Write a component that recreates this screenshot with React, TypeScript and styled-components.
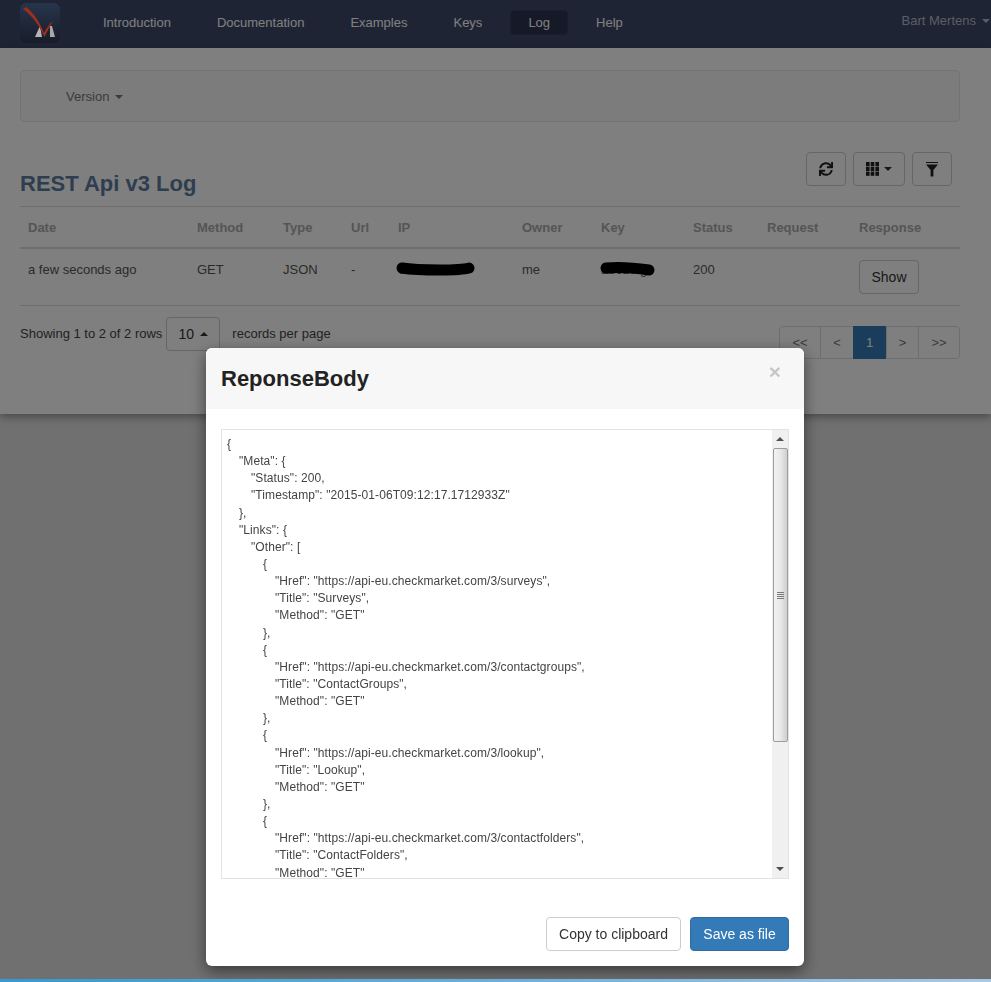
import React from "react";
import styled, { createGlobalStyle } from "styled-components";
import { FaSync } from "react-icons/fa";

const GlobalStyle = createGlobalStyle`
  html, body {
    margin: 0;
    height: 982px;
    overflow: hidden;
    background: #e0e0e0;
    font-family: "Liberation Sans", Arial, sans-serif;
    font-size: 13px;
    line-height: 20px;
    color: #555;
  }
  * { box-sizing: border-box; }
`;

const Navbar = styled.nav`
  display: flex;
  align-items: center;
  height: 48px;
  padding: 0 1px 0 20px;
  background: #3c4866;
`;

const Logo = styled.svg`
  position: relative;
  z-index: 2;
  width: 40px;
  height: 40px;
  margin: -3px 25px 0 0;
  flex-shrink: 0;
`;

const NavList = styled.div`
  display: flex;
  align-items: center;
  gap: 10px;
  flex: 1;
  margin-top: -3px;
`;

const NavLink = styled.a<{ $active?: boolean }>`
  display: block;
  height: 25px;
  padding: 0 18px;
  line-height: 26px;
  color: #ffffff;
  background: ${(p) => (p.$active ? "#2c3350" : "transparent")};
  border: ${(p) => (p.$active ? "1px solid #343c58" : "none")};
  border-radius: 4px;
  ${(p) => p.$active && "padding: 0 17px; line-height: 24px;"}
`;

const UserMenu = styled.a`
  display: flex;
  align-items: center;
  gap: 6px;
  margin-top: -6px;
  color: #b4bccb;
`;

const Caret = styled.span<{ $up?: boolean; $color?: string }>`
  display: inline-block;
  width: 0;
  height: 0;
  border-left: 4px solid transparent;
  border-right: 4px solid transparent;
  ${(p) => (p.$up ? "border-bottom" : "border-top")}: 4px solid ${(p) => p.$color || "currentColor"};
`;

const Main = styled.main`
  height: 366px;
  padding: 22px 31px 0 20px;
  background: #ffffff;
  box-shadow: 0 3px 8px rgba(0, 0, 0, 0.35);
`;

const VersionBar = styled.div`
  display: flex;
  align-items: center;
  height: 52px;
  padding: 2px 0 0 45px;
  background: #f8f8f8;
  border: 1px solid #e7e7e7;
  border-radius: 4px;
`;

const VersionLink = styled.a`
  display: flex;
  align-items: center;
  gap: 6px;
  color: #777;
`;

const TitleRow = styled.div`
  display: flex;
  justify-content: space-between;
  height: 84px;
  padding: 30px 8px 0 0;
`;

const Title = styled.h3`
  margin: 18px 0 0;
  font-size: 22px;
  line-height: 28px;
  font-weight: 700;
  color: #5e7c9e;
`;

const Toolbar = styled.div`
  display: flex;
  gap: 7px;
  align-items: flex-start;
`;

const Button = styled.button<{ $width?: number; $primary?: boolean }>`
  display: inline-flex;
  align-items: center;
  justify-content: center;
  gap: 5px;
  height: 34px;
  width: ${(p) => (p.$width ? `${p.$width}px` : "auto")};
  padding: 0;
  font: 14px/20px "Liberation Sans", Arial, sans-serif;
  color: ${(p) => (p.$primary ? "#ffffff" : "#333")};
  background: ${(p) => (p.$primary ? "#337ab7" : "#ffffff")};
  border: 1px solid ${(p) => (p.$primary ? "#2e6da4" : "#ccc")};
  border-radius: 4px;
`;

const Table = styled.table`
  width: 940px;
  table-layout: fixed;
  border-collapse: collapse;
  border-top: 1px solid #ddd;
  border-bottom: 1px solid #ddd;
`;

const Col = styled.col<{ $w: number }>`
  width: ${(p) => p.$w}px;
`;

const Th = styled.th`
  height: 41px;
  padding: 2px 8px 0;
  text-align: left;
  font-weight: 700;
  color: #aaa;
  border-bottom: 2px solid #ddd;
`;

const Td = styled.td`
  position: relative;
  height: 58px;
  padding: 11px 8px 0;
  vertical-align: top;
  white-space: nowrap;
`;

const ShowButton = styled(Button)`
  display: flex;
`;

const Redaction = styled.svg`
  position: absolute;
  left: 0;
  top: 0;
`;

const TableFooter = styled.div`
  display: flex;
  align-items: flex-start;
  padding-top: 11px;
`;

const RowsInfo = styled.div`
  display: flex;
  align-items: center;
  height: 34px;
  color: #444;
`;

const PageSize = styled(Button)`
  width: 54px;
  margin: 0 12px 0 4px;
  gap: 6px;
`;

const Pagination = styled.div`
  display: flex;
  margin: 9px 0 0 auto;
  height: 33px;
  border: 1px solid #ddd;
  border-radius: 4px;
`;

const PageCell = styled.a<{ $w: number; $active?: boolean }>`
  display: flex;
  align-items: center;
  justify-content: center;
  width: ${(p) => p.$w}px;
  margin: ${(p) => (p.$active ? "-1px 0" : "0")};
  color: ${(p) => (p.$active ? "#ffffff" : "#777")};
  background: ${(p) => (p.$active ? "#337ab7" : "transparent")};
  border-left: ${(p) => (p.$active ? "none" : "1px solid #ddd")};
  &:first-child { border-left: none; }
`;

const Backdrop = styled.div`
  position: fixed;
  z-index: 1;
  inset: 0;
  padding: 348px 0 0 206px;
  background: rgba(0, 0, 0, 0.5);
`;

const Modal = styled.div`
  width: 598px;
  height: 618px;
  background: #ffffff;
  border-radius: 6px;
  box-shadow: 0 5px 15px rgba(0, 0, 0, 0.5);
  overflow: hidden;
`;

const ModalHeader = styled.header`
  display: flex;
  justify-content: space-between;
  height: 61px;
  padding: 16px 23px 0 15px;
  background: #f7f7f7;
`;

const ModalTitle = styled.h4`
  margin: 0;
  font-size: 22px;
  line-height: 30px;
  font-weight: 700;
  color: #222;
`;

const Close = styled.span`
  margin-top: -3px;
  font-size: 21px;
  line-height: 21px;
  font-weight: 700;
  color: #000;
  opacity: 0.2;
`;

const ModalBody = styled.div`
  padding: 20px 15px 0;
`;

const JsonBox = styled.div`
  display: flex;
  height: 450px;
  border: 1px solid #e3e3e3;
`;

const JsonText = styled.pre`
  flex: 1;
  margin: 0;
  padding: 6px 5px 0;
  overflow: hidden;
  font: 12px/17.14px "Liberation Sans", Arial, sans-serif;
  letter-spacing: 0.08px;
  color: #444;
  tab-size: 12px;
`;

const Scrollbar = styled.div`
  display: flex;
  flex-direction: column;
  align-items: center;
  width: 16px;
  background: #f0f0f0;
`;

const ScrollArrow = styled.div`
  display: flex;
  align-items: center;
  justify-content: center;
  height: 18px;
  flex-shrink: 0;
  color: #505050;
`;

const ScrollThumb = styled.div`
  display: flex;
  flex-direction: column;
  justify-content: center;
  align-items: center;
  gap: 1px;
  width: 15px;
  height: 294px;
  background: linear-gradient(90deg, #f2f2f2, #e8e8e8 50%, #cfcfcf);
  border: 1px solid #9c9c9c;
  border-radius: 2px;
`;

const Grip = styled.span`
  width: 7px;
  height: 1px;
  background: #7a7a7a;
`;

const ScrollTrack = styled.div`
  flex: 1;
`;

const ModalFooter = styled.footer`
  display: flex;
  justify-content: flex-end;
  gap: 9px;
  padding: 38px 15px 0;
`;

const TaskbarEdge = styled.div`
  position: fixed;
  z-index: 2;
  left: 0;
  right: 0;
  bottom: 0;
  height: 3px;
  background: linear-gradient(90deg, #3a97d0, #62aedc 45%, #a9c8e6 100%);
`;

const COLUMNS: [string, number][] = [
  ["Date", 169],
  ["Method", 86],
  ["Type", 68],
  ["Url", 47],
  ["IP", 124],
  ["Owner", 79],
  ["Key", 92],
  ["Status", 74],
  ["Request", 92],
  ["Response", 109],
];

const NAV = ["Introduction", "Documentation", "Examples", "Keys", "Log", "Help"];

const PAGES: [string, number, boolean][] = [
  ["<<", 40, false],
  ["<", 33, false],
  ["1", 33, true],
  [">", 32, false],
  [">>", 41, false],
];

const JSON_TEXT = `{
\t"Meta": {
\t\t"Status": 200,
\t\t"Timestamp": "2015-01-06T09:12:17.1712933Z"
\t},
\t"Links": {
\t\t"Other": [
\t\t\t{
\t\t\t\t"Href": "https://api-eu.checkmarket.com/3/surveys",
\t\t\t\t"Title": "Surveys",
\t\t\t\t"Method": "GET"
\t\t\t},
\t\t\t{
\t\t\t\t"Href": "https://api-eu.checkmarket.com/3/contactgroups",
\t\t\t\t"Title": "ContactGroups",
\t\t\t\t"Method": "GET"
\t\t\t},
\t\t\t{
\t\t\t\t"Href": "https://api-eu.checkmarket.com/3/lookup",
\t\t\t\t"Title": "Lookup",
\t\t\t\t"Method": "GET"
\t\t\t},
\t\t\t{
\t\t\t\t"Href": "https://api-eu.checkmarket.com/3/contactfolders",
\t\t\t\t"Title": "ContactFolders",
\t\t\t\t"Method": "GET"`;

const BrandLogo = () => (
  <Logo viewBox="0 0 40 40">
    <defs>
      <linearGradient id="logoBg" x1="0" y1="0" x2="0" y2="1">
        <stop offset="0" stopColor="#27354b" />
        <stop offset="1" stopColor="#171c29" />
      </linearGradient>
    </defs>
    <rect width="40" height="40" rx="6" fill="url(#logoBg)" />
    <path d="M15 34 L20 23 L22 34 Z" fill="#b4b4b4" />
    <path d="M30 23 L32 23 L35 34 L30 34 Z" fill="#a8a8a8" />
    <path d="M3 6 L6 4 C14 10 20 20 24 30 C26 26 29 21 33 18 C30 23 27 29 24.5 34 C20 24 13 13 3 6 Z" fill="#a02e1e" />
  </Logo>
);

const ColumnsIcon = () => (
  <svg width="13" height="14" viewBox="0 0 13 14" fill="#222">
    {[0, 4.7, 9.4].map((x) =>
      [0, 4.8, 9.6].map((y) => <rect key={`${x}-${y}`} x={x} y={y} width="3.6" height="4.2" />)
    )}
  </svg>
);

const FilterIcon = () => (
  <svg width="14" height="15" viewBox="0 0 14 15" fill="#222">
    <rect x="1" y="0" width="12" height="1" />
    <path d="M1 2.5 H13 L8.4 8 V14.5 H5.6 V8 Z" />
  </svg>
);

const App: React.FC = () => {
  return (
    <>
      <GlobalStyle />
      <Navbar>
        <BrandLogo />
        <NavList>
          {NAV.map((item) => (
            <NavLink key={item} $active={item === "Log"}>
              {item}
            </NavLink>
          ))}
        </NavList>
        <UserMenu>
          Bart Mertens <Caret />
        </UserMenu>
      </Navbar>
      <Main>
        <VersionBar>
          <VersionLink>
            Version <Caret />
          </VersionLink>
        </VersionBar>
        <TitleRow>
          <Title>REST Api v3 Log</Title>
          <Toolbar>
            <Button $width={40}>
              <FaSync size={14} color="#222" />
            </Button>
            <Button $width={52}>
              <ColumnsIcon />
              <Caret />
            </Button>
            <Button $width={40}>
              <FilterIcon />
            </Button>
          </Toolbar>
        </TitleRow>
        <Table>
          <colgroup>
            {COLUMNS.map(([name, width]) => (
              <Col key={name} $w={width} />
            ))}
          </colgroup>
          <thead>
            <tr>
              {COLUMNS.map(([name]) => (
                <Th key={name}>{name}</Th>
              ))}
            </tr>
          </thead>
          <tbody>
            <tr>
              <Td>a few seconds ago</Td>
              <Td>GET</Td>
              <Td>JSON</Td>
              <Td>-</Td>
              <Td>
                00.000.000
                <Redaction width="100" height="40">
                  <path d="M12 19 C24 21 40 21 50 21 C60 21 72 21 79 19" fill="none" stroke="#000" strokeWidth="11" strokeLinecap="round" />
                </Redaction>
              </Td>
              <Td>me</Td>
              <Td>
                abcdefg
                <Redaction width="80" height="40">
                  <path d="M13 19 C24 18 42 19 56 21" fill="none" stroke="#000" strokeWidth="11" strokeLinecap="round" />
                </Redaction>
              </Td>
              <Td>200</Td>
              <Td />
              <Td>
                <ShowButton $width={60}>Show</ShowButton>
              </Td>
            </tr>
          </tbody>
        </Table>
        <TableFooter>
          <RowsInfo>Showing 1 to 2 of 2 rows</RowsInfo>
          <PageSize>
            10 <Caret $up />
          </PageSize>
          <RowsInfo>records per page</RowsInfo>
          <Pagination>
            {PAGES.map(([label, width, active]) => (
              <PageCell key={label} $w={width} $active={active}>
                {label}
              </PageCell>
            ))}
          </Pagination>
        </TableFooter>
      </Main>
      <Backdrop>
        <Modal>
          <ModalHeader>
            <ModalTitle>ReponseBody</ModalTitle>
            <Close>×</Close>
          </ModalHeader>
          <ModalBody>
            <JsonBox>
              <JsonText>{JSON_TEXT}</JsonText>
              <Scrollbar>
                <ScrollArrow>
                  <Caret $up />
                </ScrollArrow>
                <ScrollThumb>
                  <Grip />
                  <Grip />
                  <Grip />
                  <Grip />
                </ScrollThumb>
                <ScrollTrack />
                <ScrollArrow>
                  <Caret />
                </ScrollArrow>
              </Scrollbar>
            </JsonBox>
          </ModalBody>
          <ModalFooter>
            <Button $width={135}>Copy to clipboard</Button>
            <Button $width={99} $primary>
              Save as file
            </Button>
          </ModalFooter>
        </Modal>
      </Backdrop>
      <TaskbarEdge />
    </>
  );
};

export default App;
